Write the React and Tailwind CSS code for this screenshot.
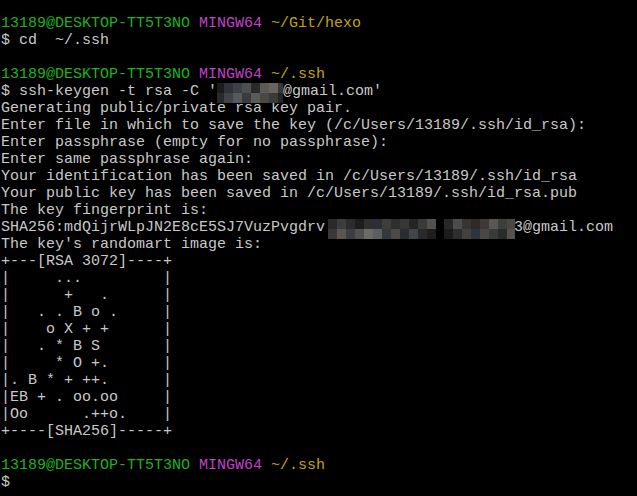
const GREEN = "text-[#1cb41c]";
const MAGENTA = "text-[#c242c8]";
const YELLOW = "text-[#c3a310]";

/* ---------- pixelated mask over the email ---------- */
const Pixels = ({ width, cells }) => (
  <span className={`relative inline-block h-[17px] align-top ${width}`}>
    <span className="absolute left-0 top-0 flex h-[20px]">
      {cells.map(([top, bottom, w], i) => (
        <span key={i} className="flex flex-col" style={{ width: w }}>
          <span className="h-[10px]" style={{ background: top }} />
          <span className="h-[10px]" style={{ background: bottom }} />
        </span>
      ))}
    </span>
  </span>
);

const EMAIL_ONE = [
  ["#1c1c1c", "#2a2a2a", 7],
  ["#2f3236", "#404348", 9],
  ["#3c4047", "#55585c", 9],
  ["#4d4f52", "#3a3b3c", 9],
  ["#2a2a2a", "#5b5a57", 9],
  ["#5d5a56", "#4a4744", 9],
  ["#6a645e", "#3c3a38", 9],
  ["#3a3836", "#252423", 5],
];

const FP_LEFT = [
  ["#2a2a2a", "#3a3838", 9],
  ["#3b3c3d", "#5a564f", 9],
  ["#2c2c2e", "#3a3d42", 9],
  ["#1e1c1c", "#505050", 9],
  ["#302e2e", "#6a6a66", 9],
  ["#2a2f38", "#5c5e62", 9],
  ["#403c3a", "#35393e", 9],
  ["#2f2f30", "#4c4a48", 9],
  ["#383636", "#2a2c30", 9],
  ["#262425", "#42464a", 9],
  ["#3a3a3a", "#2a2a2a", 9],
  ["#55504a", "#1e1e1e", 9],
];

const FP_RIGHT = [
  ["#2a2826", "#1c1c1c", 9],
  ["#4a4c4e", "#2e2e2e", 9],
  ["#383432", "#45403c", 9],
  ["#2e2a2a", "#2c3440", 9],
  ["#3e3838", "#4a4644", 9],
  ["#5a5652", "#3a3a38", 9],
  ["#3c3f3a", "#2a2c2a", 9],
  ["#4a4844", "#55524c", 8],
];

/* ---------- one terminal row ---------- */
const Row = ({ children }) => (
  <div className="h-[17px] whitespace-pre leading-[17px]">{children || " "}</div>
);

const Prompt = ({ dir }) => (
  <Row>
    <span className={GREEN}>13189@DESKTOP-TT5T3NO</span>{" "}
    <span className={MAGENTA}>MINGW64</span>{" "}
    <span className={YELLOW}>{dir}</span>
  </Row>
);

const OUTPUT = [
  "Generating public/private rsa key pair.",
  "Enter file in which to save the key (/c/Users/13189/.ssh/id_rsa):",
  "Enter passphrase (empty for no passphrase):",
  "Enter same passphrase again:",
  "Your identification has been saved in /c/Users/13189/.ssh/id_rsa",
  "Your public key has been saved in /c/Users/13189/.ssh/id_rsa.pub",
  "The key fingerprint is:",
];

const RANDOMART = [
  "+---[RSA 3072]----+",
  "|     ...         |",
  "|      +   .      |",
  "|   . . B o .     |",
  "|    o X + +      |",
  "|   . * B S       |",
  "|     * O +.      |",
  "|. B * + ++.      |",
  "|EB + . oo.oo     |",
  "|Oo      .++o.    |",
  "+----[SHA256]-----+",
];

export default function App() {
  return (
    <div className="h-[496px] w-[637px] overflow-hidden bg-black pl-[1px] pt-[15px] font-['Liberation_Mono',monospace] text-[15px] text-[#c8c8c8]">
      <Prompt dir="~/Git/hexo" />
      <Row>$ cd  ~/.ssh</Row>
      <Row />
      <Prompt dir="~/.ssh" />
      <Row>
        $ ssh-keygen -t rsa -C '
        <Pixels width="w-[66px]" cells={EMAIL_ONE} />
        @gmail.com'
      </Row>
      {OUTPUT.map((line) => (
        <Row key={line}>{line}</Row>
      ))}
      <Row>
        SHA256:mdQijrWLpJN2E8cE5SJ7VuzPvgdrv
        <span className="relative inline-block h-[17px] w-[189px] align-top">
          <span className="absolute left-[3px] top-0 flex gap-[8px]">
            <Pixels width="w-[108px]" cells={FP_LEFT} />
            <Pixels width="w-[71px]" cells={FP_RIGHT} />
          </span>
        </span>
        3@gmail.com
      </Row>
      <Row>The key's randomart image is:</Row>
      {RANDOMART.map((line, i) => (
        <Row key={i}>{line}</Row>
      ))}
      <Row />
      <Prompt dir="~/.ssh" />
      <Row>$</Row>
    </div>
  );
}
